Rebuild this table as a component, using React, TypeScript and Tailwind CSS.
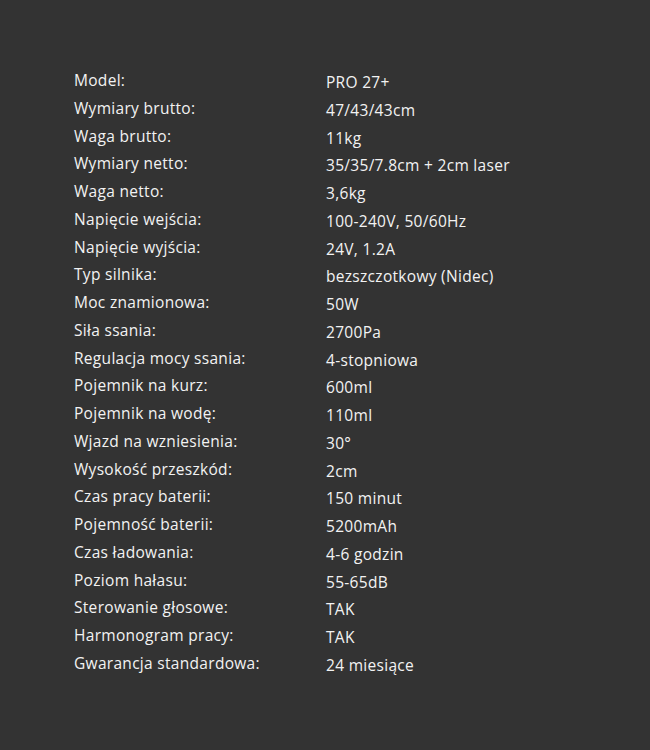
const specs: [string, string][] = [
  ['Model:', 'PRO 27+'],
  ['Wymiary brutto:', '47/43/43cm'],
  ['Waga brutto:', '11kg'],
  ['Wymiary netto:', '35/35/7.8cm + 2cm laser'],
  ['Waga netto:', '3,6kg'],
  ['Napięcie wejścia:', '100-240V, 50/60Hz'],
  ['Napięcie wyjścia:', '24V, 1.2A'],
  ['Typ silnika:', 'bezszczotkowy (Nidec)'],
  ['Moc znamionowa:', '50W'],
  ['Siła ssania:', '2700Pa'],
  ['Regulacja mocy ssania:', '4-stopniowa'],
  ['Pojemnik na kurz:', '600ml'],
  ['Pojemnik na wodę:', '110ml'],
  ['Wjazd na wzniesienia:', '30°'],
  ['Wysokość przeszkód:', '2cm'],
  ['Czas pracy baterii:', '150 minut'],
  ['Pojemność baterii:', '5200mAh'],
  ['Czas ładowania:', '4-6 godzin'],
  ['Poziom hałasu:', '55-65dB'],
  ['Sterowanie głosowe:', 'TAK'],
  ['Harmonogram pracy:', 'TAK'],
  ['Gwarancja standardowa:', '24 miesiące'],
];

export default function App() {
  return (
    <div className="min-h-[750px] w-[650px] bg-[#333333] px-[74px] pt-[67px] font-['Open_Sans',sans-serif] text-[15.5px] font-medium tracking-[0.3px] text-[#f2f2f2]">
      <div className="flex flex-col">
        {specs.map(([label, value]) => (
          <div key={label} className="grid h-[27.76px] grid-cols-[252px_1fr] items-start">
            <span className="leading-[27px]">{label}</span>
            <span className="pt-[2px] leading-[27px]">{value}</span>
          </div>
        ))}
      </div>
    </div>
  );
}
